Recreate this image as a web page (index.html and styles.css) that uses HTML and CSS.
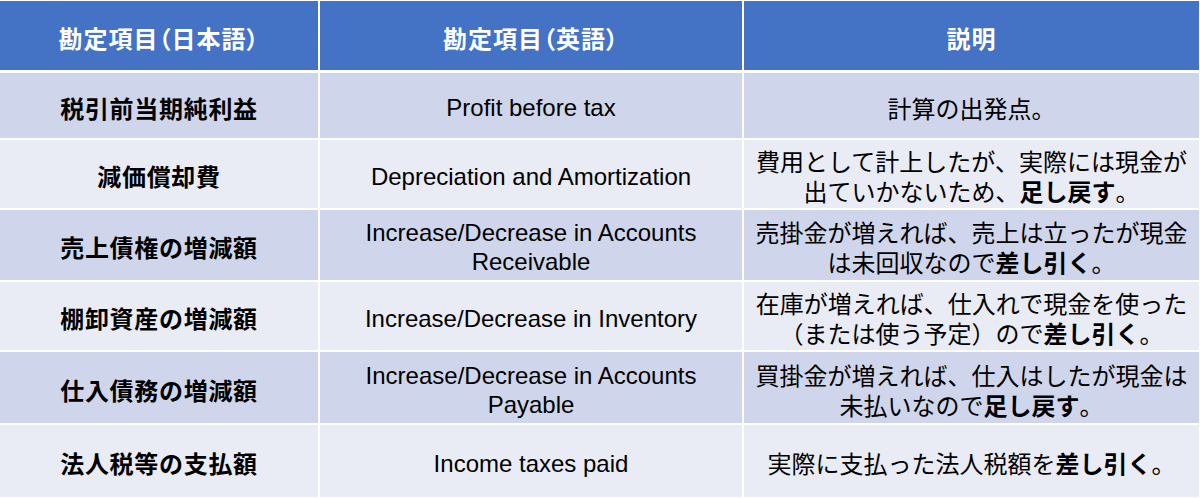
FILE: index.html
```html
<!DOCTYPE html>
<html lang="ja">
<head>
<meta charset="utf-8">
<link rel="stylesheet" href="styles.css">
</head>
<body>
<div class="table">
  <div class="cell head"><span>勘定項目（日本語）</span></div>
  <div class="cell head"><span>勘定項目（英語）</span></div>
  <div class="cell head"><span>説明</span></div>

  <div class="cell odd jp"><span>税引前当期純利益</span></div>
  <div class="cell odd en"><span>Profit before tax</span></div>
  <div class="cell odd desc"><span>計算の出発点。</span></div>

  <div class="cell even jp"><span>減価償却費</span></div>
  <div class="cell even en"><span>Depreciation and Amortization</span></div>
  <div class="cell even desc"><span>費用として計上したが、実際には現金が<br>出ていかないため、<b>足し戻す</b>。</span></div>

  <div class="cell odd jp"><span>売上債権の増減額</span></div>
  <div class="cell odd en"><span>Increase/Decrease in Accounts<br>Receivable</span></div>
  <div class="cell odd desc"><span>売掛金が増えれば、売上は立ったが現金<br>は未回収なので<b>差し引く</b>。</span></div>

  <div class="cell even jp"><span>棚卸資産の増減額</span></div>
  <div class="cell even en"><span>Increase/Decrease in Inventory</span></div>
  <div class="cell even desc"><span>在庫が増えれば、仕入れで現金を使った<br>（または使う予定）ので<b>差し引く</b>。</span></div>

  <div class="cell odd jp"><span>仕入債務の増減額</span></div>
  <div class="cell odd en"><span>Increase/Decrease in Accounts<br>Payable</span></div>
  <div class="cell odd desc"><span>買掛金が増えれば、仕入はしたが現金は<br>未払いなので<b>足し戻す</b>。</span></div>

  <div class="cell even jp"><span>法人税等の支払額</span></div>
  <div class="cell even en"><span>Income taxes paid</span></div>
  <div class="cell even desc"><span>実際に支払った法人税額を<b>差し引く</b>。</span></div>
</div>
</body>
</html>
```
FILE: styles.css
```css
html, body {
  margin: 0;
  padding: 0;
  background: #ffffff;
  overflow: hidden;
}
body {
  width: 1200px;
  height: 498px;
  font-family: "Noto Sans CJK JP", "Noto Sans", sans-serif;
  color: #000;
}
.table {
  display: grid;
  grid-template-columns: 318px 422px 455px;
  grid-template-rows: 70px 65px 68px 70px 68px 71px 72px;
  column-gap: 2px;
  row-gap: 2px;
  padding-top: 1px;
}
.cell {
  display: flex;
  align-items: center;
  justify-content: center;
  text-align: center;
  font-size: 24px;
  line-height: 30px;
  padding-top: 4px;
  box-sizing: border-box;
}
.head {
  background: #4472c4;
  color: #fff;
  font-weight: bold;
  margin-bottom: 1px;
  font-feature-settings: "palt";
  letter-spacing: 1px;
}
.odd { background: #cfd5ea; }
.even { background: #e9ebf5; }
.jp {
  font-weight: bold;
  letter-spacing: 0.7px;
}
.en {
  font-family: "Liberation Sans", Arial, sans-serif;
  font-size: 24px;
  line-height: 29px;
}
.desc {
  white-space: nowrap;
}
.desc b { font-weight: bold; }
```
